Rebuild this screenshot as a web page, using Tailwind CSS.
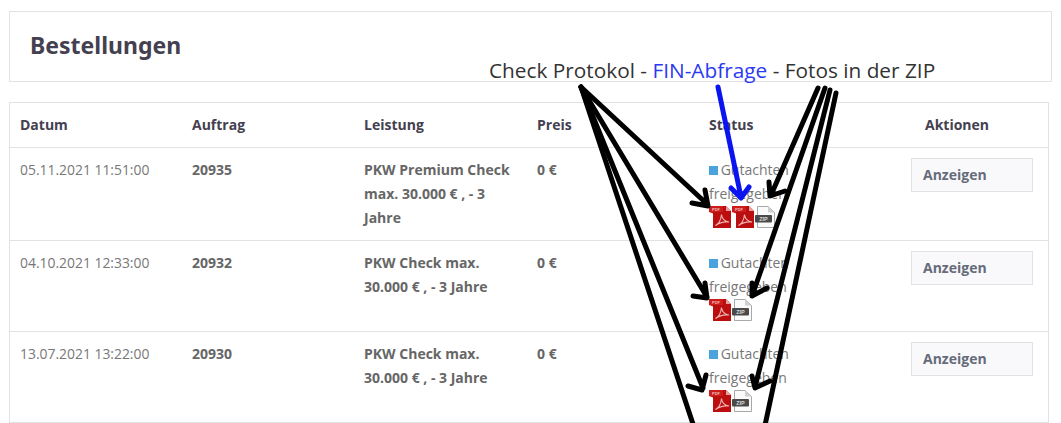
<!DOCTYPE html>
<html lang="de">
<head>
<meta charset="utf-8">
<title>Bestellungen</title>
<script src="https://cdn.jsdelivr.net/npm/@tailwindcss/browser@4"></script>
</head>
<body class="bg-white font-['Open_Sans',sans-serif] text-[14px] leading-[24px] text-[#777]">
<svg class="hidden" aria-hidden="true">
  <symbol id="pdf" viewBox="0 0 22 22">
    <path d="M4 0H17L22 5V22H4Z" fill="#bb0f0f"/>
    <path d="M17 0L22 5H17Z" fill="#e9a0a0"/>
    <path d="M0 0H14V6H4V7.500L0 6Z" fill="#cc1c1c"/>
    <text x="7" y="4.600" text-anchor="middle" font-family="Liberation Sans" font-size="4" font-weight="700" fill="#f0b8b8">PDF</text>
    <path d="M6.500 19.500C9.500 18 12 13.500 12.500 8.500C13 12.500 15.500 15.500 20 16C15.500 15.500 10.500 16.500 6.500 19.500Z" fill="none" stroke="#f0b4b4" stroke-width="1.100"/>
  </symbol>
  <symbol id="zip" viewBox="0 0 20 22">
    <path d="M2.500 .5H13L19.500 6.500V21.500H2.500Z" fill="#fafafa" stroke="#a9a9a9"/>
    <path d="M13 .5V6.500H19.500Z" fill="#cfcfcf"/>
    <rect x="0" y="9" width="17" height="7.500" rx="1" fill="#4a4a4a"/>
    <text x="8.500" y="15" text-anchor="middle" font-family="Liberation Sans" font-size="5.500" font-weight="700" fill="#d8d8d8">ZIP</text>
  </symbol>
</svg>

<main class="relative h-[423px] overflow-hidden px-[9px] pt-[11px]">
  <header class="flex h-[71px] items-center border border-[#e1e1e6] pb-[4px] pl-5">
    <h1 class="font-['Noto_Sans',sans-serif] text-[23px] font-bold text-[#444050]">Bestellungen</h1>
  </header>

  <section class="mt-5 w-[1040px] border border-[#e1e1e6]">
    <div class="grid h-[45px] grid-cols-[172px_172px_173px_172px_172px_1fr] items-center border-b border-[#e1e1e6] pl-[10px] font-bold text-[#444050]">
      <div>Datum</div><div>Auftrag</div><div>Leistung</div><div>Preis</div><div>Status</div>
      <div class="pr-[15px] text-center">Aktionen</div>
    </div>

    <div class="grid h-[93px] grid-cols-[172px_172px_173px_172px_172px_1fr] border-b border-[#e1e1e6] pt-[10px] pl-[10px]">
      <div class="text-[13.9px]">05.11.2021 11:51:00</div>
      <div class="font-bold text-[#666]">20935</div>
      <div class="pr-4 font-bold text-[#666]">PKW Premium Check max. 30.000 € , - 3 Jahre</div>
      <div class="font-bold text-[#666]">0 €</div>
      <div class="pr-3">
        <div><span class="-mr-px inline-block size-[9px] bg-[#4aa3df]"></span> Gutachten freigegeben</div>
        <div class="flex gap-px"><svg class="h-[22px] w-[22px]"><use href="#pdf"/></svg><svg class="h-[22px] w-[22px]"><use href="#pdf"/></svg><svg class="h-[22px] w-[20px]"><use href="#zip"/></svg></div>
      </div>
      <div class="pl-[30px]"><button class="h-[34px] w-[122px] border border-[#e1e1e6] bg-[#f9f9fb] pl-[11px] text-left font-bold text-[#666b7a]">Anzeigen</button></div>
    </div>

    <div class="grid h-[91px] grid-cols-[172px_172px_173px_172px_172px_1fr] border-b border-[#e1e1e6] pt-[10px] pl-[10px]">
      <div class="text-[13.9px]">04.10.2021 12:33:00</div>
      <div class="font-bold text-[#666]">20932</div>
      <div class="pr-4 font-bold text-[#666]">PKW Check max. 30.000 € , - 3 Jahre</div>
      <div class="font-bold text-[#666]">0 €</div>
      <div class="pr-3">
        <div><span class="-mr-px inline-block size-[9px] bg-[#4aa3df]"></span> Gutachten freigegeben</div>
        <div class="flex gap-px"><svg class="h-[22px] w-[22px]"><use href="#pdf"/></svg><svg class="h-[22px] w-[20px]"><use href="#zip"/></svg></div>
      </div>
      <div class="pl-[30px]"><button class="h-[34px] w-[122px] border border-[#e1e1e6] bg-[#f9f9fb] pl-[11px] text-left font-bold text-[#666b7a]">Anzeigen</button></div>
    </div>

    <div class="grid h-[91px] grid-cols-[172px_172px_173px_172px_172px_1fr] border-b border-[#e1e1e6] pt-[10px] pl-[10px]">
      <div class="text-[13.9px]">13.07.2021 13:22:00</div>
      <div class="font-bold text-[#666]">20930</div>
      <div class="pr-4 font-bold text-[#666]">PKW Check max. 30.000 € , - 3 Jahre</div>
      <div class="font-bold text-[#666]">0 €</div>
      <div class="pr-3">
        <div><span class="-mr-px inline-block size-[9px] bg-[#4aa3df]"></span> Gutachten freigegeben</div>
        <div class="flex gap-px"><svg class="h-[22px] w-[22px]"><use href="#pdf"/></svg><svg class="h-[22px] w-[20px]"><use href="#zip"/></svg></div>
      </div>
      <div class="pl-[30px]"><button class="h-[34px] w-[122px] border border-[#e1e1e6] bg-[#f9f9fb] pl-[11px] text-left font-bold text-[#666b7a]">Anzeigen</button></div>
    </div>
  </section>

  <!-- hand-drawn annotation lying over the table -->
  <svg class="absolute top-0 left-0 h-[423px] w-[1061px]" viewBox="0 0 1061 423" fill="none" stroke-linecap="round" stroke-linejoin="round">
    <g stroke="#000" stroke-width="5">
      <path d="M581 87L707 204M692 203L708 206L705 190"/>
      <path d="M581 87L707 297M693 296L707 298L705 283"/>
      <path d="M581 87L703 388M688 386L702 390L706 375"/>
      <path d="M581 87L695 430"/>
      <path d="M818 88L771 195M769 182L770 196L785 191"/>
      <path d="M825 88L752 296M752 283L752 296L767 288"/>
      <path d="M830 90L755 387M752 376L755 388L770 381"/>
      <path d="M836 93L764 430"/>
    </g>
    <g stroke="#0a14f0" stroke-width="5">
      <path d="M718 87L741 197M731 188L741 198L749 187"/>
    </g>
  </svg>
  <p class="absolute top-[56px] left-[489px] text-[20.8px] leading-[28px] whitespace-nowrap text-[#333]">Check Protokol - <span class="text-[#2a3af2]">FIN-Abfrage</span> - Fotos in der ZIP</p>
</main>
</body>
</html>
